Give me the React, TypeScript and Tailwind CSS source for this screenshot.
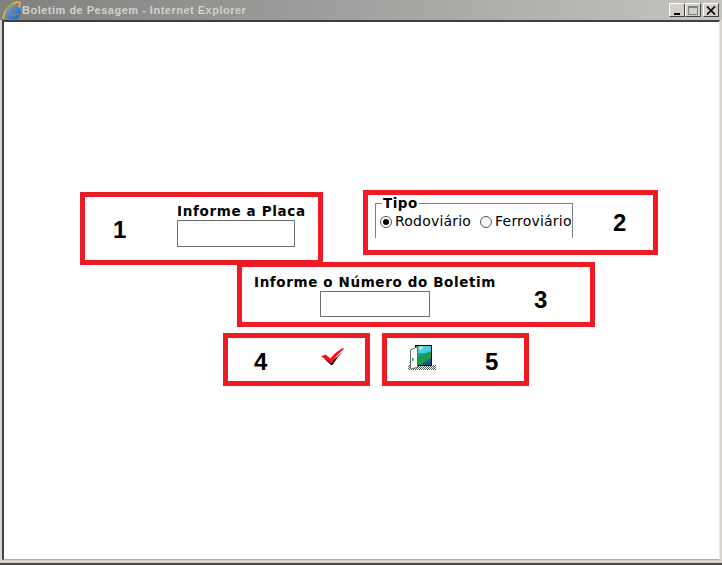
import { ReactNode } from "react";

const verdana = "font-['DejaVu_Sans',sans-serif]";
const marker = "font-['Liberation_Sans',sans-serif] text-[24px] leading-none font-bold text-black";

function IeIcon() {
  return (
    <svg width="19" height="19" viewBox="0 0 19 19" className="shrink-0">
      <defs>
        <linearGradient id="ie" x1="0" y1="0" x2="1" y2="1">
          <stop offset="0" stopColor="#e8a838" />
          <stop offset="0.45" stopColor="#3a8ae0" />
          <stop offset="1" stopColor="#1f62c0" />
        </linearGradient>
      </defs>
      <path d="M2 18C.5 14 4 7 10 3.500c3.500-2 6.500-2.800 7.500-1.800 1 1 .3 3-.8 4.800" fill="none" stroke="#eeb030" strokeWidth="1.800" />
      <path
        fillRule="evenodd"
        d="M11 3.500C15.500 3.500 18.500 7 18.500 11.500V12.500H8C8.300 14.500 9.700 15.500 11.300 15.500 12.800 15.500 13.700 14.900 14.300 13.800H18.200C17.200 16.800 14.600 18.500 11.200 18.500 6.800 18.500 3.800 15.500 3.800 11.200 3.800 6.800 7 3.500 11 3.500ZM8 9.500H14.500C14.300 7.800 13 6.700 11.200 6.700 9.500 6.700 8.300 7.800 8 9.500Z"
        fill="url(#ie)"
      />
    </svg>
  );
}

function WinButton({ children }: { children: ReactNode }) {
  return (
    <div className="w-[16px] h-[14px] bg-[#d4d0c8] border border-t-white border-l-white border-r-[#404040] border-b-[#404040] flex items-center justify-center">
      {children}
    </div>
  );
}

function TitleBar() {
  return (
    <div className="h-[20px] shrink-0 flex items-center justify-between pl-[2px] pr-[3px] bg-gradient-to-r from-[#808080] to-[#c4c4c0]">
      <div className="flex items-center gap-[1px]">
        <IeIcon />
        <span className="font-['Liberation_Sans',sans-serif] text-[11px] font-bold text-[#d4d0c8] tracking-[0.5px]">
          Boletim de Pesagem - Internet Explorer
        </span>
      </div>
      <div className="flex items-center">
        <WinButton>
          <div className="w-[6px] h-[2px] bg-black mt-[7px] mr-[1px]" />
        </WinButton>
        <WinButton>
          <div className="w-[10px] h-[9px] border border-[#808080] border-t-2" />
        </WinButton>
        <div className="ml-[2px]">
          <WinButton>
            <svg width="10" height="9" viewBox="0 0 10 9">
              <path d="M1 .5 9 8.500M9 .5 1 8.500" stroke="#000" strokeWidth="1.700" />
            </svg>
          </WinButton>
        </div>
      </div>
    </div>
  );
}

function AnnotationBox({ className, children }: { className: string; children: ReactNode }) {
  return <div className={`relative shrink-0 border-[5px] border-[#ed1c24] ${className}`}>{children}</div>;
}

function Radio({ label, checked }: { label: string; checked?: boolean }) {
  return (
    <label className="flex items-center">
      <span className="w-[12px] h-[12px] mr-[3px] rounded-full border border-[#555] bg-white flex items-center justify-center">
        {checked && <span className="w-[6px] h-[6px] rounded-full bg-black" />}
      </span>
      <span>{label}</span>
    </label>
  );
}

function CheckIcon() {
  return (
    <svg width="26" height="20" viewBox="0 0 26 20">
      <path d="M4 11.500 11 18h1.500Q17 10 24 3.500L12 14.500z" fill="#000" />
      <path d="M1 9.500 5.500 7.500l5 4Q15.500 4.500 23 1l1 1Q16.500 8 11.500 16.500H10.500Q6.500 12 1 9.500z" fill="#ff0f14" />
    </svg>
  );
}

function DoorIcon() {
  return (
    <svg width="30" height="26" viewBox="0 0 30 26">
      <defs>
        <pattern id="dither" width="2" height="2" patternUnits="userSpaceOnUse">
          <rect width="1" height="1" fill="#555" />
          <rect x="1" y="1" width="1" height="1" fill="#555" />
        </pattern>
      </defs>
      <rect x="1" y="20" width="28" height="5" fill="url(#dither)" />
      <rect x="8" y="0" width="17" height="21" fill="#000" />
      <rect x="10" y="1" width="14" height="19" fill="#16a5a5" />
      <rect x="10" y="1" width="14" height="7" fill="#45cfee" />
      <circle cx="14" cy="3" r="1.800" fill="#f4ee60" />
      <path d="M10 12 24 6v7L13 20h-3z" fill="#1f9a46" />
      <path d="M13 20 24 13v7z" fill="#0b5f7a" />
      <path d="M3.500 5 10.500 1.500v21l-7 1.500z" fill="#fafafa" stroke="#666" strokeWidth="1" />
      <rect x="5" y="13" width="1.500" height="3" fill="#3a8a8a" />
    </svg>
  );
}

export default function App() {
  return (
    <div className={`w-[722px] h-[565px] overflow-hidden flex flex-col bg-[#d4d0c8] ${verdana}`}>
      <TitleBar />
      <div className="flex-1 min-h-0 flex flex-col pl-[2px] pr-[2px] pb-[3px] bg-[#d8d4cc]">
        <div className="flex-1 min-h-0 bg-white border-t-2 border-l-2 border-t-[#404040] border-l-[#404040] border-r border-b border-r-[#e8e8e8] border-b-[#aaa]">
          <div className="pt-[168px] flex flex-col -ml-[4px]">
            <div className="flex items-start h-[73px]">
              <AnnotationBox className="ml-[80px] mt-[2px] w-[243px] h-[73px] flex">
                <span className={`${marker} mt-[21px] ml-[28px] w-[64px]`}>1</span>
                <div className="mt-[6px]">
                  <div className="text-[13.5px] leading-[17px] font-bold text-black tracking-[0.65px]">Informe a Placa</div>
                  <input type="text" className="block w-[118px] h-[27px] border border-[#707070] bg-white" />
                </div>
              </AnnotationBox>
              <AnnotationBox className="ml-[40px] w-[295px] h-[65px] flex">
                <fieldset className="ml-[7px] mt-[1px] w-[198px] h-[42px] border-t border-l border-r border-[#808080] text-[14px] text-black leading-[17px] tracking-[0.2px]">
                  <legend className="ml-[6px] px-[1px] font-bold text-[13.5px] leading-[15px] tracking-[0.5px]">Tipo</legend>
                  <div className="flex items-center pl-[4px] mt-[2px]">
                    <Radio label="Rodoviário" checked />
                    <div className="ml-[9px]">
                      <Radio label="Ferroviário" />
                    </div>
                  </div>
                </fieldset>
                <span className={`${marker} mt-[16px] ml-[40px]`}>2</span>
              </AnnotationBox>
            </div>
            <div className="flex h-[70px]">
              <AnnotationBox className="ml-[237px] -mt-[1px] w-[358px] h-[65px]">
                <div className="flex">
                  <div className="ml-[12px] mt-[7px] w-[268px]">
                    <div className="text-[13.5px] leading-[17px] font-bold text-black tracking-[0.62px]">Informe o Número do Boletim</div>
                    <input type="text" className="block ml-[66px] w-[110px] h-[26px] border border-[#707070] bg-white" />
                  </div>
                  <span className={`${marker} mt-[21px] ml-[12px]`}>3</span>
                </div>
              </AnnotationBox>
            </div>
            <div className="flex">
              <AnnotationBox className="ml-[223px] w-[147px] h-[53px] flex items-center">
                <span className={`${marker} ml-[26px] mt-[4px]`}>4</span>
                <div className="ml-[53px] -mt-[5px]">
                  <CheckIcon />
                </div>
              </AnnotationBox>
              <AnnotationBox className="ml-[12px] w-[147px] h-[53px] flex items-center">
                <div className="ml-[20px] -mt-[4px]">
                  <DoorIcon />
                </div>
                <span className={`${marker} ml-[48px] mt-[4px]`}>5</span>
              </AnnotationBox>
            </div>
          </div>
        </div>
      </div>
      <div className="h-[2px] shrink-0 bg-[#404858]" />
    </div>
  );
}
